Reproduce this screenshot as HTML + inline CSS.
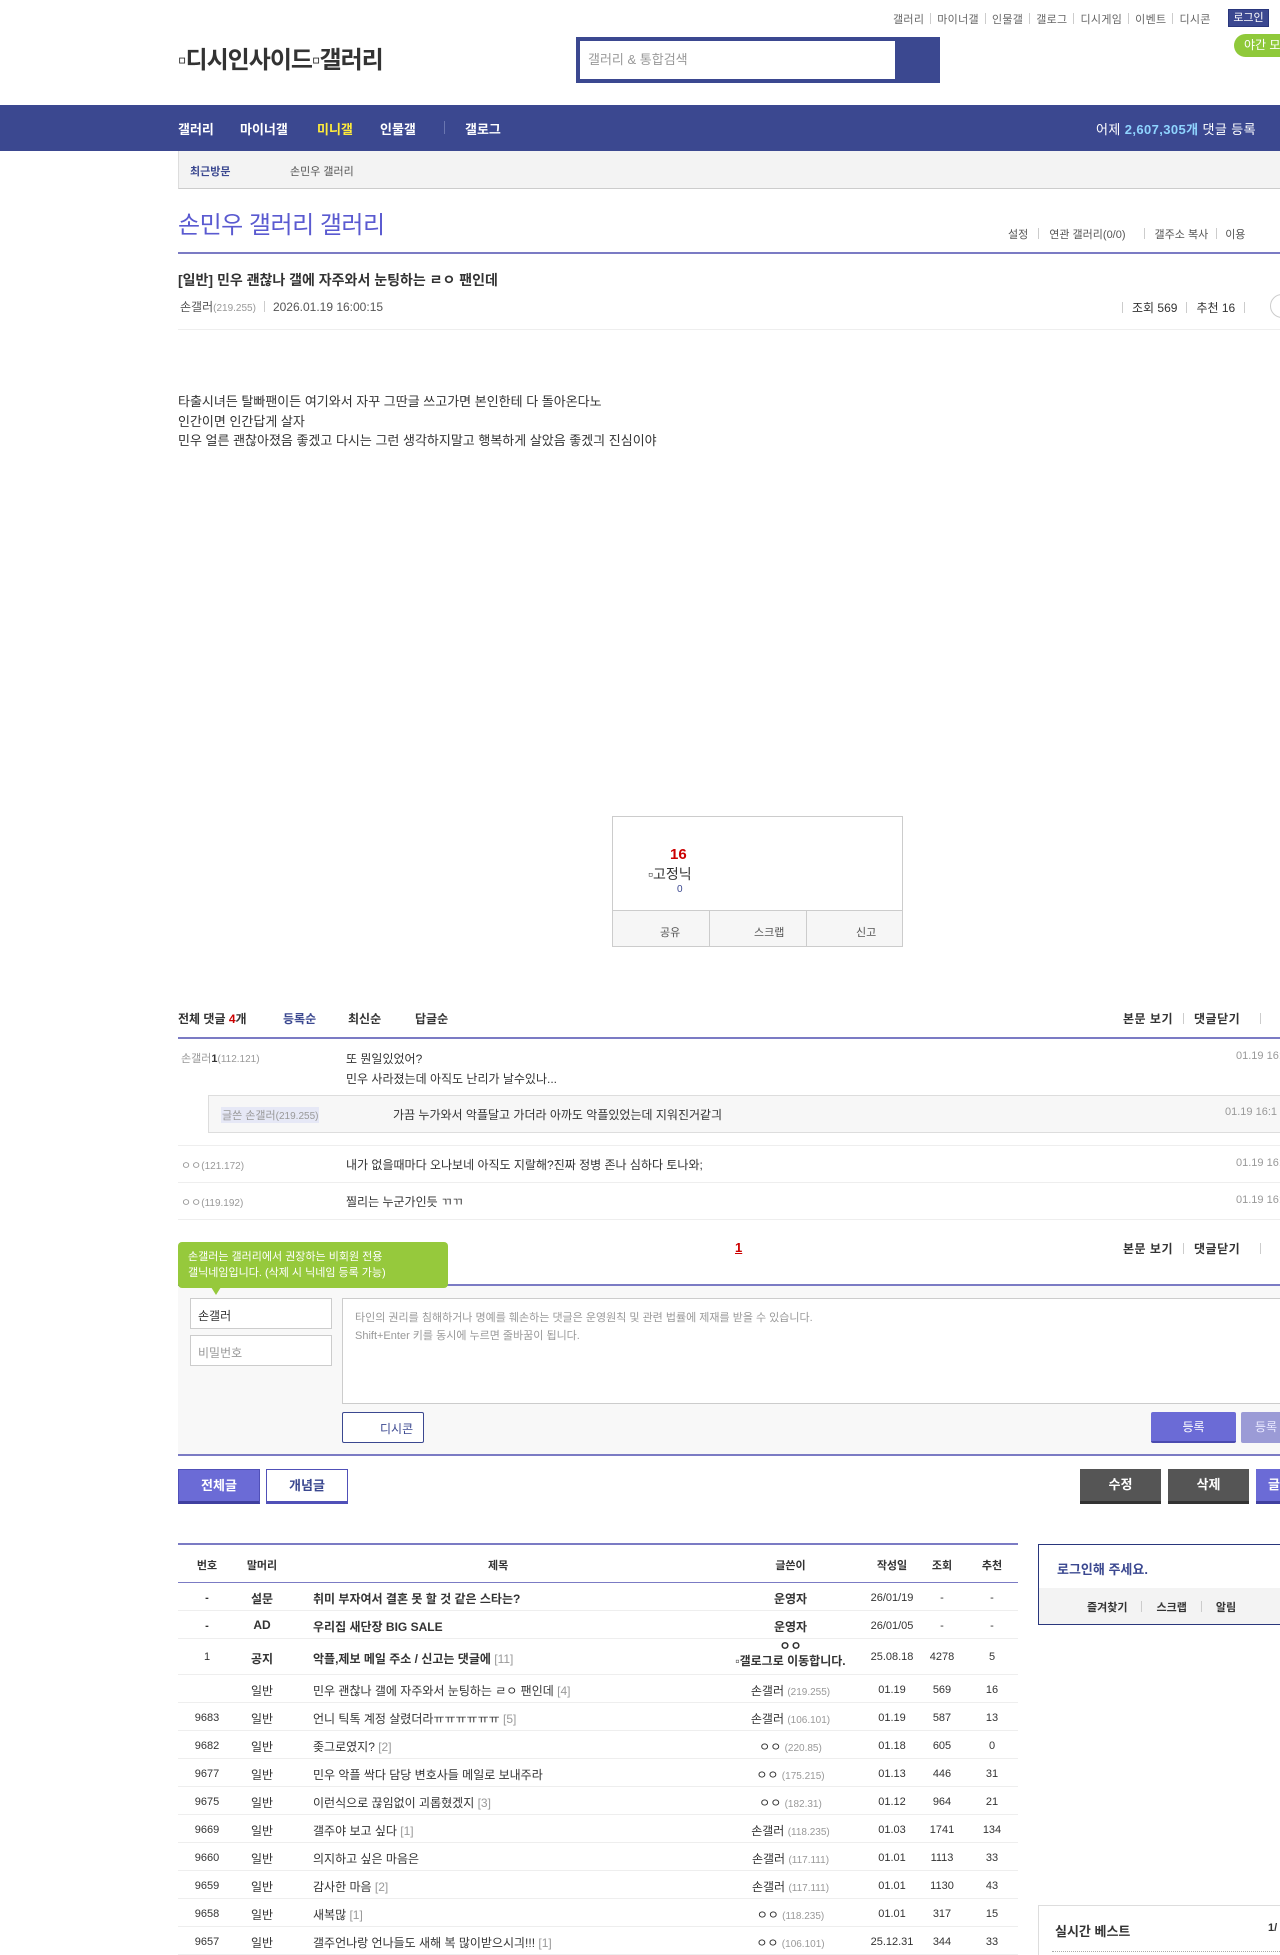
<!DOCTYPE html>
<html><head><meta charset="utf-8">
<style>
*{margin:0;padding:0;box-sizing:border-box}
html,body{width:1280px;height:1955px;overflow:hidden;background:#fff}
body{position:relative;font-family:"Liberation Sans","Noto Sans CJK KR",sans-serif;color:#333;font-size:12px}
.a{position:absolute;white-space:nowrap}
.g{color:#999}
.sep{display:inline-block;width:1px;height:11px;background:#ccc;margin:0 6px;vertical-align:-1px}
.row{position:absolute;left:178px;width:840px;height:28px;border-bottom:1px solid #eee;font-size:12px}
.row span{position:absolute;top:7px;white-space:nowrap}
.row span.c1,.row span.c5,.row span.c6,.row span.c7{top:9px}
.c1{left:0;width:58px;text-align:center;font-size:11px}
.c2{left:58px;width:52px;text-align:center}
.c3{left:135px}
.c4{left:520px;width:185px;text-align:center}
.c5{left:692px;width:44px;text-align:center;font-size:11px}
.c6{left:742px;width:44px;text-align:center;font-size:11px}
.c7{left:792px;width:44px;text-align:center;font-size:11px}
.c4 i{font-style:normal;color:#999;font-size:10px}
.cm{color:#999;font-size:11px}
</style></head><body>

<div class="a" style="left:893px;top:11px;font-size:11px;color:#666;letter-spacing:0.3px">갤러리<span class="sep"></span>마이너갤<span class="sep"></span>인물갤<span class="sep"></span>갤로그<span class="sep"></span>디시게임<span class="sep"></span>이벤트<span class="sep"></span>디시콘</div>
<div class="a" style="left:1228px;top:9px;width:41px;height:18px;background:#3b4890;border:1px solid #29367c;color:#fff;font-size:11px;text-align:center;line-height:16px">로그인</div>
<div class="a" style="left:1234px;top:34px;width:60px;height:23px;background:#8fc93a;border-radius:12px;color:#fff;font-size:12px;line-height:23px;padding-left:10px">야간 모드</div>

<div class="a" style="left:178px;top:40px;font-size:24px;font-weight:bold;color:#333;letter-spacing:-1px">▫디시인사이드▫갤러리</div>
<div class="a" style="left:576px;top:37px;width:364px;height:46px;background:#3b4890"></div>
<div class="a" style="left:580px;top:41px;width:315px;height:38px;background:#fff;color:#999;font-size:13px;line-height:38px;padding-left:8px">갤러리 &amp; 통합검색</div>

<div class="a" style="left:0;top:105px;width:1280px;height:46px;background:#3b4890"></div>
<div class="a" style="left:178px;top:119px;font-size:13px;font-weight:bold;color:#fff">갤러리</div>
<div class="a" style="left:240px;top:119px;font-size:13px;font-weight:bold;color:#fff">마이너갤</div>
<div class="a" style="left:317px;top:119px;font-size:13px;font-weight:bold;color:#ffeb3b">미니갤</div>
<div class="a" style="left:380px;top:119px;font-size:13px;font-weight:bold;color:#fff">인물갤</div>
<div class="a" style="left:444px;top:121px;width:1px;height:13px;background:#6a76b0"></div>
<div class="a" style="left:465px;top:119px;font-size:13px;font-weight:bold;color:#fff">갤로그</div>
<div class="a" style="left:1096px;top:119px;font-size:13px;color:#fff;letter-spacing:0.4px">어제 <b style="color:#8fd4ff">2,607,305개</b> 댓글 등록</div>

<div class="a" style="left:178px;top:151px;width:1102px;height:38px;background:#f3f3f3;border-bottom:1px solid #ccc;border-left:1px solid #ddd"></div>
<div class="a" style="left:190px;top:163px;font-size:11px;font-weight:bold;color:#3b4890">최근방문</div>
<div class="a" style="left:290px;top:163px;font-size:11px;color:#555">손민우 갤러리</div>

<div class="a" style="left:178px;top:205px;font-size:24px;color:#5a5ad0;letter-spacing:-0.5px">손민우 갤러리 갤러리</div>
<div class="a" style="left:1008px;top:226px;font-size:11px;color:#555">설정<span class="sep" style="margin:0 10px"></span>연관 갤러리(0/0)<span class="sep" style="margin:0 10px 0 18px"></span>갤주소 복사<span class="sep" style="margin:0 8px"></span>이용</div>
<div class="a" style="left:178px;top:252px;width:1102px;height:2px;background:#7b7bc4"></div>

<div class="a" style="left:178px;top:270px;font-size:14px;font-weight:bold;color:#333">[일반] 민우 괜찮나 갤에 자주와서 눈팅하는 ㄹㅇ 팬인데</div>
<div class="a" style="left:180px;top:298px;font-size:12px;color:#555">손갤러<span class="g" style="font-size:10px">(219.255)</span><span class="sep" style="margin:0 8px"></span>2026.01.19 16:00:15</div>
<div class="a" style="left:1122px;top:299px;font-size:12px;color:#333"><span class="sep" style="margin:0 9px 0 0"></span>조회 569<span class="sep" style="margin:0 9px"></span>추천 16<span class="sep" style="margin:0 9px"></span></div>
<div class="a" style="left:1270px;top:294px;width:24px;height:24px;border:1px solid #ccc;border-radius:12px"></div>
<div class="a" style="left:178px;top:329px;width:1102px;height:1px;background:#eee"></div>

<div class="a" style="left:178px;top:392px;font-size:13px;line-height:19.5px;color:#333">타출시녀든 탈빠팬이든 여기와서 자꾸 그딴글 쓰고가면 본인한테 다 돌아온다노<br>인간이면 인간답게 살자<br>민우 얼른 괜찮아졌음 좋겠고 다시는 그런 생각하지말고 행복하게 살았음 좋겠긔 진심이야</div>

<div class="a" style="left:612px;top:816px;width:291px;height:131px;border:1px solid #ccc;background:#fff"></div>
<div class="a" style="left:612px;top:910px;width:291px;height:37px;background:#f6f6f6;border:1px solid #ccc"></div>
<div class="a" style="left:709px;top:910px;width:1px;height:37px;background:#ccc"></div>
<div class="a" style="left:806px;top:910px;width:1px;height:37px;background:#ccc"></div>
<div class="a" style="left:660px;top:924px;font-size:11px;color:#555">공유</div>
<div class="a" style="left:754px;top:924px;font-size:11px;color:#555">스크랩</div>
<div class="a" style="left:856px;top:924px;font-size:11px;color:#555">신고</div>
<div class="a" style="left:670px;top:846px;font-size:15px;font-weight:bold;color:#c00">16</div>
<div class="a" style="left:648px;top:864px;font-size:14px;color:#333">▫고정닉</div>
<div class="a" style="left:677px;top:884px;font-size:10px;color:#3b4890">0</div>

<div class="a" style="left:178px;top:1010px;font-size:12px;font-weight:bold;color:#333">전체 댓글 <span style="color:#c00">4</span>개</div>
<div class="a" style="left:283px;top:1010px;font-size:12px;font-weight:bold;color:#3b4890">등록순</div>
<div class="a" style="left:348px;top:1010px;font-size:12px;font-weight:bold;color:#333">최신순</div>
<div class="a" style="left:415px;top:1010px;font-size:12px;font-weight:bold;color:#333">답글순</div>
<div class="a" style="left:1123px;top:1010px;font-size:12px;font-weight:bold;color:#333;letter-spacing:0.5px">본문 보기<span class="sep" style="margin:0 10px"></span>댓글닫기<span class="sep" style="margin:0 0 0 20px"></span></div>
<div class="a" style="left:178px;top:1037px;width:1102px;height:2px;background:#7b7bc4"></div>

<div class="a cm" style="left:181px;top:1050px">손갤러<b style="color:#333">1</b><span style="font-size:10px">(112.121)</span></div>
<div class="a" style="left:346px;top:1049px;font-size:12px;line-height:20px;color:#333">또 뭔일있었어?<br>민우 사라졌는데 아직도 난리가 날수있나...</div>
<div class="a cm" style="left:1236px;top:1050px">01.19 16:</div>

<div class="a" style="left:208px;top:1095px;width:1072px;height:38px;background:#f7f7f7;border:1px solid #ddd;border-right:none"></div>
<div class="a" style="left:221px;top:1107px;font-size:11px;color:#999;background:#e6e8f6;padding:0 1px">글쓴 손갤러<span style="font-size:10px">(219.255)</span></div>
<div class="a" style="left:393px;top:1106px;font-size:12px;color:#333">가끔 누가와서 악플달고 가더라 아까도 악플있었는데 지워진거같긔</div>
<div class="a cm" style="left:1225px;top:1106px">01.19 16:1</div>
<div class="a" style="left:178px;top:1145px;width:1102px;height:1px;background:#eee"></div>

<div class="a cm" style="left:181px;top:1157px">ㅇㅇ<span style="font-size:10px">(121.172)</span></div>
<div class="a" style="left:346px;top:1156px;font-size:12px;color:#333">내가 없을때마다 오나보네 아직도 지랄해?진짜 정병 존나 심하다 토나와;</div>
<div class="a cm" style="left:1236px;top:1157px">01.19 16:</div>
<div class="a" style="left:178px;top:1182px;width:1102px;height:1px;background:#eee"></div>

<div class="a cm" style="left:181px;top:1194px">ㅇㅇ<span style="font-size:10px">(119.192)</span></div>
<div class="a" style="left:346px;top:1193px;font-size:12px;color:#333">찔리는 누군가인듯 ㄲㄲ</div>
<div class="a cm" style="left:1236px;top:1194px">01.19 16:</div>
<div class="a" style="left:178px;top:1219px;width:1102px;height:1px;background:#eee"></div>

<div class="a" style="left:735px;top:1240px;font-size:13px;font-weight:bold;color:#c00;text-decoration:underline">1</div>
<div class="a" style="left:1123px;top:1240px;font-size:12px;font-weight:bold;color:#333;letter-spacing:0.5px">본문 보기<span class="sep" style="margin:0 10px"></span>댓글닫기<span class="sep" style="margin:0 0 0 20px"></span></div>

<div class="a" style="left:178px;top:1284px;width:1102px;height:2px;background:#7b7bc4"></div>
<div class="a" style="left:178px;top:1286px;width:1102px;height:168px;background:#f8f8f8"></div>
<div class="a" style="left:178px;top:1454px;width:1102px;height:2px;background:#7b7bc4"></div>
<div class="a" style="left:178px;top:1242px;width:270px;height:46px;background:#96c93c;border-radius:4px;color:#fff;font-size:11px;line-height:16px;padding:7px 0 0 10px">손갤러는 갤러리에서 권장하는 비회원 전용<br>갤닉네임입니다. (삭제 시 닉네임 등록 가능)</div>
<div class="a" style="left:211px;top:1287px;width:0;height:0;border-left:5px solid transparent;border-right:5px solid transparent;border-top:8px solid #96c93c"></div>
<div class="a" style="left:190px;top:1298px;width:142px;height:31px;background:#fff;border:1px solid #ccc;font-size:12px;color:#333;padding:8px 0 0 7px">손갤러</div>
<div class="a" style="left:190px;top:1335px;width:142px;height:31px;background:#fff;border:1px solid #ccc;font-size:12px;color:#999;padding:8px 0 0 7px">비밀번호</div>
<div class="a" style="left:342px;top:1298px;width:940px;height:106px;background:#fff;border:1px solid #ccc;font-size:11px;color:#999;line-height:18px;padding:10px 0 0 12px">타인의 권리를 침해하거나 명예를 훼손하는 댓글은 운영원칙 및 관련 법률에 제재를 받을 수 있습니다.<br>Shift+Enter 키를 동시에 누르면 줄바꿈이 됩니다.</div>
<div class="a" style="left:342px;top:1412px;width:82px;height:31px;background:#fff;border:1px solid #3b4890;border-radius:2px;font-size:12px;color:#3b4890;padding:7px 0 0 37px">디시콘</div>
<div class="a" style="left:1151px;top:1412px;width:85px;height:31px;background:#6b6bd6;border-bottom:2px solid #4b4bb0;border-radius:2px;color:#fff;font-size:12px;text-align:center;line-height:30px">등록</div>
<div class="a" style="left:1241px;top:1412px;width:60px;height:31px;background:#9b9bd6;border-radius:2px;color:#e8e8ff;font-size:12px;line-height:30px;padding-left:14px">등록</div>

<div class="a" style="left:178px;top:1469px;width:82px;height:35px;background:#6b6bd6;border:1px solid #5050b8;border-bottom:3px solid #4040a0;color:#fff;font-size:13px;font-weight:bold;text-align:center;line-height:31px">전체글</div>
<div class="a" style="left:266px;top:1469px;width:82px;height:35px;background:#fff;border:1px solid #5050b8;border-bottom:3px solid #5050b8;color:#3b4890;font-size:13px;font-weight:bold;text-align:center;line-height:31px">개념글</div>
<div class="a" style="left:1080px;top:1469px;width:81px;height:35px;background:#555;border-bottom:3px solid #333;color:#fff;font-size:13px;font-weight:bold;text-align:center;line-height:32px">수정</div>
<div class="a" style="left:1168px;top:1469px;width:81px;height:35px;background:#555;border-bottom:3px solid #333;color:#fff;font-size:13px;font-weight:bold;text-align:center;line-height:32px">삭제</div>
<div class="a" style="left:1256px;top:1469px;width:40px;height:35px;background:#6b6bd6;border-bottom:3px solid #4040a0;color:#fff;font-size:13px;font-weight:bold;line-height:32px;padding-left:12px">글</div>

<div class="a" style="left:178px;top:1543px;width:840px;height:2px;background:#7b7bc4"></div>
<div class="row" style="top:1545px;height:38px;border-bottom:1px solid #7b7bc4;font-weight:bold;font-size:11px">
<span class="c1" style="top:12px">번호</span><span class="c2" style="top:12px">말머리</span><span style="left:310px;top:12px">제목</span><span class="c4" style="top:12px">글쓴이</span><span class="c5" style="top:12px">작성일</span><span class="c6" style="top:12px">조회</span><span class="c7" style="top:12px">추천</span></div>
<div class="row" style="top:1583px;font-weight:bold"><span class="c1">-</span><span class="c2">설문</span><span class="c3">취미 부자여서 결혼 못 할 것 같은 스타는?</span><span class="c4">운영자</span><span class="c5" style="font-weight:normal">26/01/19</span><span class="c6" style="font-weight:normal">-</span><span class="c7" style="font-weight:normal">-</span></div>
<div class="row" style="top:1611px;font-weight:bold"><span class="c1">-</span><span class="c2">AD</span><span class="c3">우리집 새단장 BIG SALE</span><span class="c4">운영자</span><span class="c5" style="font-weight:normal">26/01/05</span><span class="c6" style="font-weight:normal">-</span><span class="c7" style="font-weight:normal">-</span></div>
<div class="row" style="top:1639px;height:36px;font-weight:bold"><span class="c1" style="top:12px;font-weight:normal">1</span><span class="c2" style="top:11px">공지</span><span class="c3" style="top:11px">악플,제보 메일 주소 / 신고는 댓글에 <i style="font-style:normal;font-weight:normal;color:#999">[11]</i></span><span class="c4" style="top:0;line-height:15px">ㅇㅇ<br>▫갤로그로 이동합니다.</span><span class="c5" style="top:12px;font-weight:normal">25.08.18</span><span class="c6" style="top:12px;font-weight:normal">4278</span><span class="c7" style="top:12px;font-weight:normal">5</span></div>

<div class="row" style="top:1675px"><span class="c1"></span><span class="c2">일반</span><span class="c3">민우 괜찮나 갤에 자주와서 눈팅하는 ㄹㅇ 팬인데 <i style="font-style:normal;color:#999">[4]</i></span><span class="c4">손갤러 <i>(219.255)</i></span><span class="c5">01.19</span><span class="c6">569</span><span class="c7">16</span></div>
<div class="row" style="top:1703px"><span class="c1">9683</span><span class="c2">일반</span><span class="c3">언니 틱톡 계정 살렸더라ㅠㅠㅠㅠㅠㅠ <i style="font-style:normal;color:#999">[5]</i></span><span class="c4">손갤러 <i>(106.101)</i></span><span class="c5">01.19</span><span class="c6">587</span><span class="c7">13</span></div>
<div class="row" style="top:1731px"><span class="c1">9682</span><span class="c2">일반</span><span class="c3">좆그로였지? <i style="font-style:normal;color:#999">[2]</i></span><span class="c4">ㅇㅇ <i>(220.85)</i></span><span class="c5">01.18</span><span class="c6">605</span><span class="c7">0</span></div>
<div class="row" style="top:1759px"><span class="c1">9677</span><span class="c2">일반</span><span class="c3">민우 악플 싹다 담당 변호사들 메일로 보내주라</span><span class="c4">ㅇㅇ <i>(175.215)</i></span><span class="c5">01.13</span><span class="c6">446</span><span class="c7">31</span></div>
<div class="row" style="top:1787px"><span class="c1">9675</span><span class="c2">일반</span><span class="c3">이런식으로 끊임없이 괴롭혔겠지 <i style="font-style:normal;color:#999">[3]</i></span><span class="c4">ㅇㅇ <i>(182.31)</i></span><span class="c5">01.12</span><span class="c6">964</span><span class="c7">21</span></div>
<div class="row" style="top:1815px"><span class="c1">9669</span><span class="c2">일반</span><span class="c3">갤주야 보고 싶다 <i style="font-style:normal;color:#999">[1]</i></span><span class="c4">손갤러 <i>(118.235)</i></span><span class="c5">01.03</span><span class="c6">1741</span><span class="c7">134</span></div>
<div class="row" style="top:1843px"><span class="c1">9660</span><span class="c2">일반</span><span class="c3">의지하고 싶은 마음은</span><span class="c4">손갤러 <i>(117.111)</i></span><span class="c5">01.01</span><span class="c6">1113</span><span class="c7">33</span></div>
<div class="row" style="top:1871px"><span class="c1">9659</span><span class="c2">일반</span><span class="c3">감사한 마음 <i style="font-style:normal;color:#999">[2]</i></span><span class="c4">손갤러 <i>(117.111)</i></span><span class="c5">01.01</span><span class="c6">1130</span><span class="c7">43</span></div>
<div class="row" style="top:1899px"><span class="c1">9658</span><span class="c2">일반</span><span class="c3">새복많 <i style="font-style:normal;color:#999">[1]</i></span><span class="c4">ㅇㅇ <i>(118.235)</i></span><span class="c5">01.01</span><span class="c6">317</span><span class="c7">15</span></div>
<div class="row" style="top:1927px"><span class="c1">9657</span><span class="c2">일반</span><span class="c3">갤주언나랑 언나들도 새해 복 많이받으시긔!!! <i style="font-style:normal;color:#999">[1]</i></span><span class="c4">ㅇㅇ <i>(106.101)</i></span><span class="c5">25.12.31</span><span class="c6">344</span><span class="c7">33</span></div>

<div class="a" style="left:1038px;top:1544px;width:250px;height:81px;border:1px solid #29367c;background:#fff"></div>
<div class="a" style="left:1039px;top:1588px;width:250px;height:36px;background:#f3f3f3"></div>
<div class="a" style="left:1057px;top:1559px;font-size:13px;font-weight:bold;color:#3b4890">로그인해 주세요.</div>
<div class="a" style="left:1087px;top:1599px;font-size:11px;font-weight:bold;color:#333">즐겨찾기<span class="sep" style="margin:0 14px"></span>스크랩<span class="sep" style="margin:0 14px"></span>알림</div>
<div class="a" style="left:1038px;top:1905px;width:250px;height:60px;border:1px solid #ddd;border-bottom:none"></div>
<div class="a" style="left:1055px;top:1921px;font-size:13px;font-weight:bold;color:#333">실시간 베스트</div>
<div class="a" style="left:1268px;top:1922px;font-size:11px;font-weight:bold;color:#333">1/</div>
<div class="a" style="left:1052px;top:1951px;width:230px;height:0;border-top:1px dotted #aaa"></div>

</body></html>
